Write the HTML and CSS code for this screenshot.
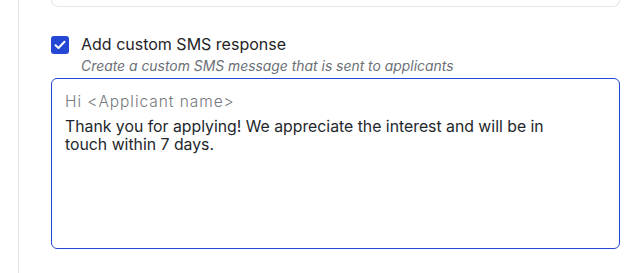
FILE: index.html
```html
<!DOCTYPE html>
<html>
<head>
<meta charset="utf-8">
<link rel="stylesheet" href="styles.css">
</head>
<body>
<div class="page">
  <div class="rail"></div>
  <main class="content">
    <div class="card-tail"></div>
    <div class="option">
      <span class="checkbox">
        <svg width="12" height="10" viewBox="0 0 12 10"><path d="M1.5 5.2 L4.5 8 L10.5 1.8" fill="none" stroke="#fff" stroke-width="2" stroke-linecap="round" stroke-linejoin="round"/></svg>
      </span>
      <div class="option-text">
        <div class="label">Add custom SMS response</div>
        <div class="hint">Create a custom SMS message that is sent to applicants</div>
      </div>
    </div>
    <div class="textarea">
      <div class="greeting">Hi &lt;Applicant name&gt;</div>
      <div class="message">Thank you for applying! We appreciate the interest and will be in touch within 7 days.</div>
    </div>
  </main>
</div>
</body>
</html>
```
FILE: styles.css
```css
html, body {
  margin: 0;
  padding: 0;
  background: #fff;
  font-family: Inter, "Noto Sans", sans-serif;
}
.page {
  display: flex;
  height: 273px;
}
.rail {
  width: 18px;
  flex: none;
  border-right: 1px solid #e2e2e2;
}
.content {
  flex: 1;
  padding: 0 17px 0 32px;
  display: flex;
  flex-direction: column;
}
.card-tail {
  height: 6px;
  border: 1px solid #e3e5ea;
  border-top: none;
  border-radius: 0 0 10px 10px;
}
.option {
  display: flex;
  gap: 12px;
  margin-top: 27px;
}
.checkbox {
  width: 18px;
  height: 18px;
  flex: none;
  background: #2447d4;
  border-radius: 3px;
  display: flex;
  align-items: center;
  justify-content: center;
  margin-top: 2px;
}
.label {
  font-size: 16px;
  line-height: 20px;
  color: #1f2328;
}
.hint {
  font-size: 13.9px;
  line-height: 17px;
  font-style: italic;
  color: #6b6f76;
  margin-top: 4px;
}
.textarea {
  margin-top: 3px;
  height: 156px;
  border: 1px solid #2447d4;
  border-radius: 6px;
  padding: 13px 48px 0 13px;
}
.greeting {
  font-size: 15.5px;
  font-weight: 300;
  letter-spacing: 0.95px;
  line-height: 20px;
  color: #76797e;
  margin-bottom: 6px;
}
.message {
  font-size: 15.8px;
  line-height: 18px;
  color: #23272c;
}
```
